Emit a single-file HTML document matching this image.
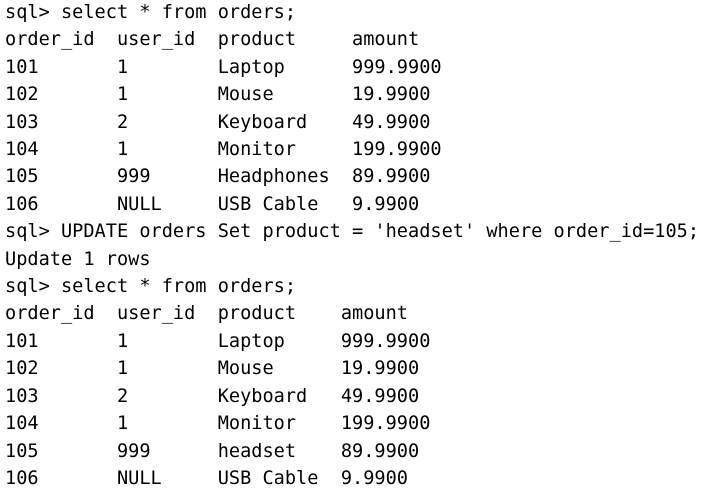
<!DOCTYPE html>
<html><head><meta charset="utf-8"><style>
html,body{margin:0;padding:0;background:#fff;width:716px;height:490px;overflow:hidden}
pre{margin:-1px 0 0 5px;font-family:"DejaVu Sans Mono","Liberation Mono",monospace;font-size:18.6px;line-height:27.4px;color:#000}
</style></head><body><pre>sql> select * from orders;
order_id  user_id  product     amount
101       1        Laptop      999.9900
102       1        Mouse       19.9900
103       2        Keyboard    49.9900
104       1        Monitor     199.9900
105       999      Headphones  89.9900
106       NULL     USB Cable   9.9900
sql> UPDATE orders Set product = 'headset' where order_id=105;
Update 1 rows
sql> select * from orders;
order_id  user_id  product    amount
101       1        Laptop     999.9900
102       1        Mouse      19.9900
103       2        Keyboard   49.9900
104       1        Monitor    199.9900
105       999      headset    89.9900
106       NULL     USB Cable  9.9900</pre></body></html>
